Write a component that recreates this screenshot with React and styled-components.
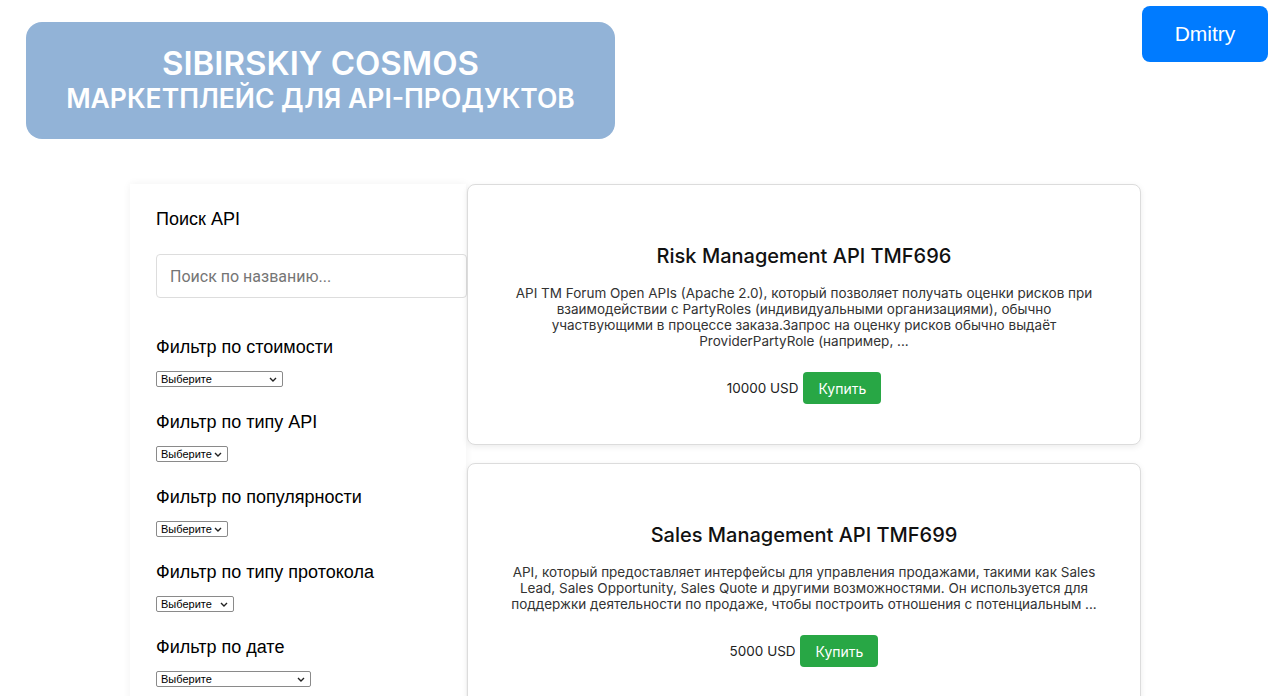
import styled, { createGlobalStyle } from "styled-components";

// Маркетплейс API: шапка, фильтры слева, карточки справа
const GlobalStyle = createGlobalStyle`
    html, body {
        margin: 0;
        padding: 0;
        background: #fff;
        font-family: "Liberation Sans", Arial, sans-serif;
        color: #000;
    }
    ::-webkit-scrollbar {
        width: 5px;
    }
    ::-webkit-scrollbar-track {
        background: #f1f1f1;
    }
    ::-webkit-scrollbar-thumb {
        background: #c1c1c1;
    }
`;

const chevron =
    "data:image/svg+xml;utf8,<svg xmlns='http://www.w3.org/2000/svg' width='8' height='5' viewBox='0 0 8 5'><path d='M1 1l3 3 3-3' fill='none' stroke='%23222' stroke-width='1.4'/></svg>";

const Header = styled.header`
    display: flex;
    justify-content: space-between;
    align-items: flex-start;
    padding: 6px 12px 0 26px;
`;

const Banner = styled.div`
    margin-top: 16px;
    width: 589px;
    height: 117px;
    box-sizing: border-box;
    padding-bottom: 2px;
    background: #92b3d7;
    border-radius: 16px;
    display: flex;
    flex-direction: column;
    align-items: center;
    justify-content: center;
    color: #fff;
    font-family: Inter, "Liberation Sans", sans-serif;
    font-weight: 600;
    text-align: center;
    .title {
        font-size: 33px;
        line-height: 36px;
    }
    .subtitle {
        font-size: 26.5px;
        line-height: 34px;
    }
`;

const UserButton = styled.button`
    width: 126px;
    height: 56px;
    border: none;
    border-radius: 8px;
    background: #007bff;
    color: #fff;
    font-family: "Liberation Sans", Arial, sans-serif;
    font-size: 21px;
    cursor: pointer;
`;

const Main = styled.main`
    display: flex;
    align-items: flex-start;
    margin: 45px 0 0 130px;
`;

const Sidebar = styled.aside`
    width: 336px;
    min-height: 560px;
    box-sizing: border-box;
    padding: 24px 0 20px 26px;
    background: #fff;
    box-shadow: 0 0 8px rgba(0, 0, 0, 0.06);
    flex-shrink: 0;
`;

const SideTitle = styled.h3`
    margin: 0 0 24px;
    font-size: 18px;
    line-height: 22px;
    font-weight: 500;
`;

const SearchInput = styled.input`
    width: 311px;
    height: 44px;
    box-sizing: border-box;
    padding: 0 13px;
    border: 1px solid #ddd;
    border-radius: 4px;
    font-family: Roboto, "Liberation Sans", sans-serif;
    font-size: 16px;
    outline: none;
    &::placeholder {
        color: #757575;
    }
`;

const Filter = styled.div`
    margin-top: ${(p) => (p.first ? "38px" : "24px")};
`;

const FilterTitle = styled.h3`
    margin: 0 0 13px;
    font-size: 18px;
    line-height: 22px;
    font-weight: 500;
`;

const Select = styled.select`
    display: block;
    appearance: none;
    width: ${(p) => p.w}px;
    height: 16px;
    box-sizing: border-box;
    padding: 0 0 0 4px;
    font-family: "Liberation Sans", Arial, sans-serif;
    font-size: 11px;
    line-height: 14px;
    border: 1px solid #8a8a8a;
    border-radius: 2px;
    background: #fff url("${chevron}") no-repeat right 5px center;
    color: #000;
`;

const Cards = styled.section`
    display: flex;
    flex-direction: column;
    gap: 18px;
    margin-left: 1px;
`;

const Card = styled.div`
    width: 674px;
    box-sizing: border-box;
    padding: 39px 40px 40px;
    border: 1px solid #dcdcdc;
    border-radius: 8px;
    background: #fff;
    box-shadow: 0 2px 6px rgba(0, 0, 0, 0.08);
    text-align: center;
    font-family: Inter, "Liberation Sans", sans-serif;
`;

const CardTitle = styled.h2`
    margin: 20px 0 17px;
    font-size: 20px;
    line-height: 24px;
    font-weight: 500;
    color: #111;
`;

const CardText = styled.p`
    margin: 0;
    font-size: 13.5px;
    line-height: 16px;
    color: #333;
`;

const PriceRow = styled.div`
    display: flex;
    justify-content: center;
    align-items: center;
    gap: 4px;
    margin-top: 23px;
    font-size: 13.5px;
    color: #222;
`;

const BuyButton = styled.button`
    height: 32px;
    padding: 0 15px 0 16px;
    border: none;
    border-radius: 4px;
    background: #28a745;
    color: #fff;
    font-family: Inter, "Liberation Sans", sans-serif;
    font-size: 14px;
    cursor: pointer;
`;

const filters = [
    { title: "Фильтр по стоимости", w: 127 },
    { title: "Фильтр по типу API", w: 72 },
    { title: "Фильтр по популярности", w: 72 },
    { title: "Фильтр по типу протокола", w: 78 },
    { title: "Фильтр по дате", w: 155 },
];

const products = [
    {
        name: "Risk Management API TMF696",
        text: "API TM Forum Open APIs (Apache 2.0), который позволяет получать оценки рисков при взаимодействии с PartyRoles (индивидуальными организациями), обычно участвующими в процессе заказа.Запрос на оценку рисков обычно выдаёт ProviderPartyRole (например, ...",
        price: "10000 USD",
    },
    {
        name: "Sales Management API TMF699",
        text: "API, который предоставляет интерфейсы для управления продажами, такими как Sales Lead, Sales Opportunity, Sales Quote и другими возможностями. Он используется для поддержки деятельности по продаже, чтобы построить отношения с потенциальным ...",
        price: "5000 USD",
    },
];

const App = () => {
    return (
        <>
            <GlobalStyle />
            <Header>
                <Banner>
                    <div className="title">SIBIRSKIY COSMOS</div>
                    <div className="subtitle">МАРКЕТПЛЕЙС ДЛЯ API-ПРОДУКТОВ</div>
                </Banner>
                <UserButton>Dmitry</UserButton>
            </Header>
            <Main>
                <Sidebar>
                    <SideTitle>Поиск API</SideTitle>
                    <SearchInput placeholder="Поиск по названию..." />
                    {filters.map((f, i) => (
                        <Filter key={f.title} first={i === 0}>
                            <FilterTitle>{f.title}</FilterTitle>
                            <Select w={f.w} defaultValue="">
                                <option value="">Выберите</option>
                            </Select>
                        </Filter>
                    ))}
                </Sidebar>
                <Cards>
                    {products.map((p) => (
                        <Card key={p.name}>
                            <CardTitle>{p.name}</CardTitle>
                            <CardText>{p.text}</CardText>
                            <PriceRow>
                                {p.price}
                                <BuyButton>Купить</BuyButton>
                            </PriceRow>
                        </Card>
                    ))}
                </Cards>
            </Main>
        </>
    );
};

export default App;
